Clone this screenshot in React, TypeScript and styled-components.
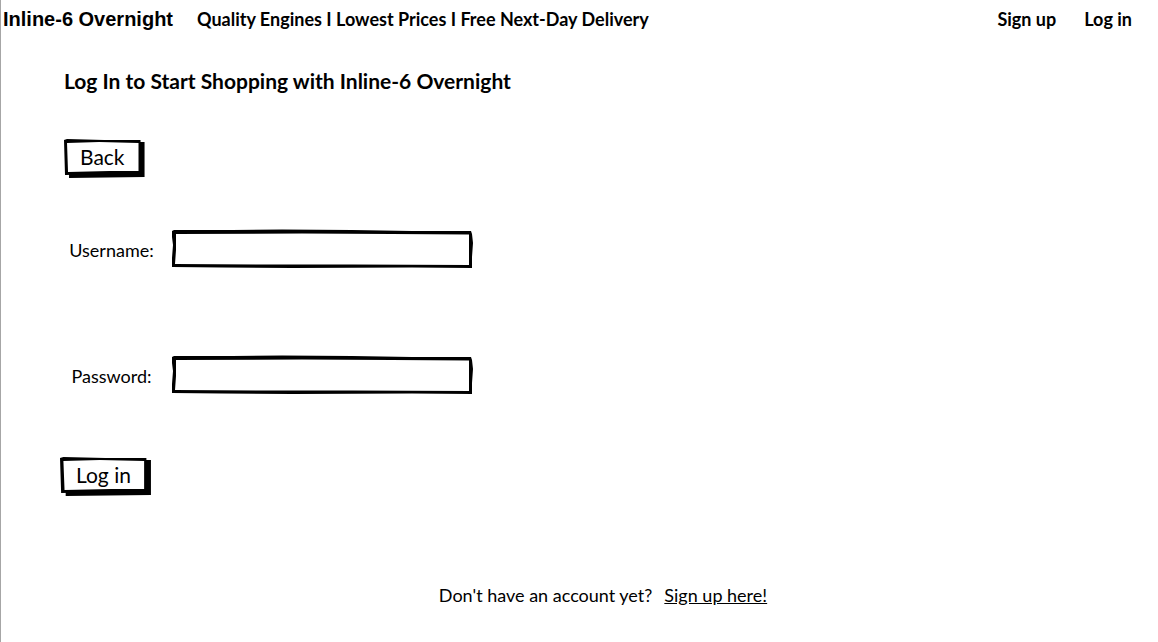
import React from 'react';
import styled, { createGlobalStyle } from 'styled-components';

const GlobalStyle = createGlobalStyle`
  *, *::before, *::after { box-sizing: border-box; }
  body {
    margin: 0;
    background: #fff;
    color: #000;
    font-family: Lato, "Noto Sans", sans-serif;
    font-size: 18px;
    line-height: 24px;
  }
`;

const Page = styled.div`
  min-height: 100vh;
  border-left: 1px solid #a6a6a6;
`;

const Header = styled.header`
  display: flex;
  align-items: center;
  height: 38px;
  padding: 0 26px 0 2px;
`;

const Logo = styled.a`
  width: 194px;
  color: #000;
  font: bold 20px/40px "Liberation Sans", Arial, sans-serif;
  text-decoration: none;
  white-space: nowrap;
`;

const Tagline = styled.p`
  margin: 0;
  font-weight: 700;
  white-space: nowrap;
`;

const Nav = styled.nav`
  display: flex;
  gap: 28px;
  margin-left: auto;
`;

const NavLink = styled.a`
  color: #000;
  font-weight: 700;
  text-decoration: none;
`;

const Main = styled.main`
  padding: 31px 60px 0 59px;
`;

const Title = styled.h1`
  margin: 0 0 46px 4px;
  font-size: 21px;
  line-height: 24px;
`;

const Frame = styled.svg`
  position: absolute;
  inset: 0;
  width: 100%;
  height: 100%;
  overflow: visible;
  pointer-events: none;
`;

const Button = styled.button<{ $inset?: boolean }>`
  position: relative;
  display: block;
  height: 39px;
  margin-left: ${({ $inset }) => ($inset ? 4 : 0)}px;
  padding: 0 20px 4px 16px;
  border: 0;
  background: none;
  color: #000;
  font: 21px/34px Lato, "Noto Sans", sans-serif;
  cursor: pointer;
`;

const Caption = styled.span`
  position: relative;
`;

const Form = styled.form`
  padding-top: 52px;
`;

const Field = styled.div`
  display: flex;
  align-items: center;
  height: 38px;
  margin-bottom: 88px;
`;

const Label = styled.label`
  width: 103px;
  margin-right: 9px;
  padding-top: 2px;
  text-align: center;
`;

const InputBox = styled.div`
  position: relative;
  width: 301px;
  height: 38px;
`;

const Input = styled.input`
  position: relative;
  width: 100%;
  height: 100%;
  padding: 0 12px;
  border: 0;
  outline: 0;
  background: transparent;
  font: inherit;
`;

const Submit = styled.div`
  margin-top: -25px;
`;

const Footer = styled.p`
  display: flex;
  justify-content: center;
  gap: 12px;
  margin: 87px 0 0 48px;
`;

const FooterLink = styled.a`
  color: #000;
`;

function SketchButton({ children, inset, type }: { children: string; inset?: boolean; type: 'button' | 'submit' }) {
  return (
    <Button type={type} $inset={inset}>
      <Frame viewBox="0 0 80 39" preserveAspectRatio="none" aria-hidden="true">
        <path d="M5 33 L74 33 L75 3 L80 3 L80 38 L5 39 Z" />
        <path d="M0 1 L3 0 L40 1 L76 1 L76 34 L50 35 L1 36 Z" />
        <path fill="#fff" d="M3 4 L35 3 L74 4 L74 32 L45 32 L4 33 Z" />
      </Frame>
      <Caption>{children}</Caption>
    </Button>
  );
}

function SketchField({ id, label, type }: { id: string; label: string; type: string }) {
  return (
    <Field>
      <Label htmlFor={id}>{label}</Label>
      <InputBox>
        <Frame viewBox="0 0 301 38" preserveAspectRatio="none" aria-hidden="true">
          <path
            fillRule="evenodd"
            d="M0 1 L2 0 L60 0 L110 -0.5 L180 0 L240 1 L299 1 L300 4 L301 13 L300 27 L300 38 L240 37.5 L120 38 L50 37.5 L0 37 L0 28 L1 15 L0 7 Z
               M4 4 L4 12 L4 20 L3 34 L90 34.5 L180 34.5 L297 35 L297 20 L297 4.5 L220 4 L130 3.5 Z"
          />
        </Frame>
        <Input id={id} name={id} type={type} />
      </InputBox>
    </Field>
  );
}

export default function App() {
  return (
    <Page>
      <GlobalStyle />
      <Header>
        <Logo href="#home">Inline-6 Overnight</Logo>
        <Tagline>Quality Engines I Lowest Prices I Free Next-Day Delivery</Tagline>
        <Nav>
          <NavLink href="#signup">Sign up</NavLink>
          <NavLink href="#login">Log in</NavLink>
        </Nav>
      </Header>
      <Main>
        <Title>Log In to Start Shopping with Inline-6 Overnight</Title>
        <SketchButton type="button" inset>Back</SketchButton>
        <Form onSubmit={(event) => event.preventDefault()}>
          <SketchField id="username" label="Username:" type="text" />
          <SketchField id="password" label="Password:" type="password" />
          <Submit>
            <SketchButton type="submit">Log in</SketchButton>
          </Submit>
        </Form>
        <Footer>
          <span>Don't have an account yet?</span>
          <FooterLink href="#signup">Sign up here!</FooterLink>
        </Footer>
      </Main>
    </Page>
  );
}
